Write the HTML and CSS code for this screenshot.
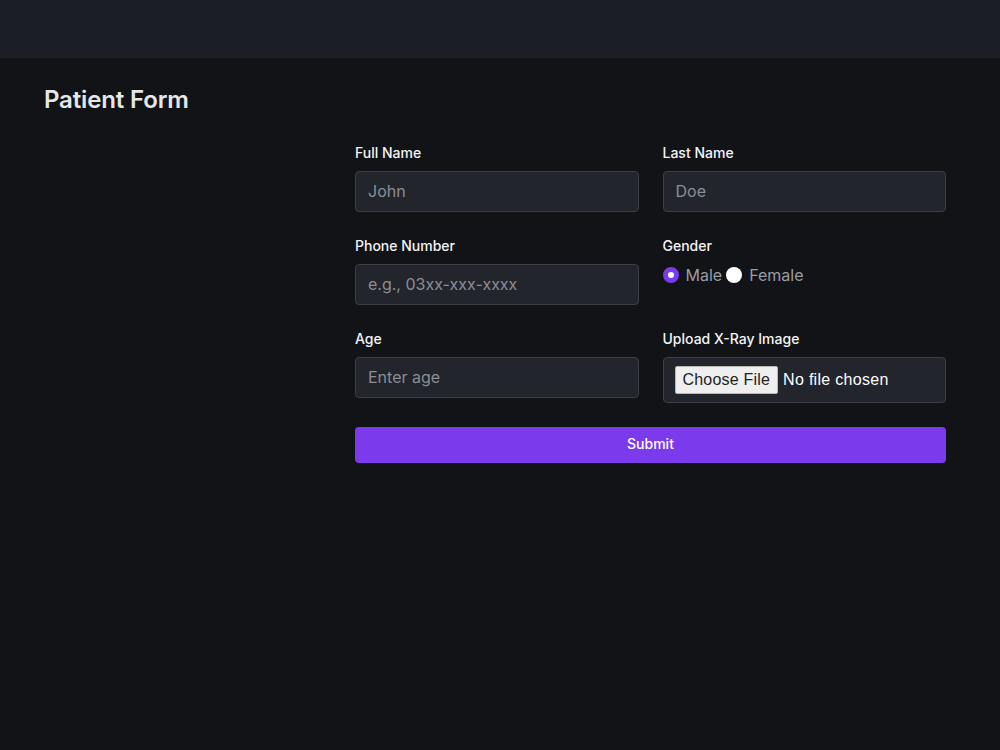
FILE: index.html
```html
<!DOCTYPE html>
<html lang="en">
<head>
    <meta charset="UTF-8">
    <meta name="viewport" content="width=device-width, initial-scale=1.0">
    <title>Patient Form</title>
    <link rel="stylesheet" href="styles.css">
</head>
<body>

<div class="topbar"></div>

<div id="container">
    <h1>Patient Form</h1>

    <form id="form" class="patient-form">
        <div class="field">
            <label for="first">Full Name</label>
            <input type="text" id="first" placeholder="John">
        </div>
        <div class="field">
            <label for="last">Last Name</label>
            <input type="text" id="last" placeholder="Doe">
        </div>

        <div class="field">
            <label for="phone">Phone Number</label>
            <input type="text" id="phone" placeholder="e.g., 03xx-xxx-xxxx">
        </div>
        <div class="field">
            <label>Gender</label>
            <div class="radios">
                <label class="radio"><span class="dot checked"></span>Male</label>
                <label class="radio"><span class="dot"></span>Female</label>
            </div>
        </div>

        <div class="field">
            <label for="age">Age</label>
            <input type="text" id="age" placeholder="Enter age">
        </div>
        <div class="field">
            <label for="xray">Upload X-Ray Image</label>
            <input type="file" id="xray" accept="image/*">
        </div>

        <button type="button" class="submit">Submit</button>
    </form>
</div>

</body>
</html>
```

FILE: styles.css
```css
body {
    font-family: Inter, "Noto Sans", sans-serif;
    background-color: #121317;
    color: #f3f4f6;
    margin: 0;
    padding: 0;
}

.topbar {
    height: 58px;
    background-color: #1b1e26;
}

#container {
    padding: 24px 44px;
}

h1 {
    margin: 2px 0 0;
    font-size: 24px;
    font-weight: 600;
    line-height: 32px;
    letter-spacing: -0.15px;
    color: #e5e7eb;
}

.patient-form {
    margin: 27px 0 0 311px;
    width: 591px;
    display: grid;
    grid-template-columns: 1fr 1fr;
    column-gap: 24px;
    row-gap: 24px;
}

.field > label {
    display: block;
    font-size: 14px;
    font-weight: 500;
    line-height: 20px;
    margin-bottom: 8px;
    color: #f3f4f6;
}

input[type="text"] {
    box-sizing: border-box;
    width: 100%;
    height: 41px;
    padding: 0 12px 1px;
    background-color: #22252c;
    border: 1px solid #3b3e46;
    border-radius: 4px;
    color: #e5e7eb;
    font-family: Inter, "Noto Sans", sans-serif;
    font-size: 16px;
}

input::placeholder {
    color: #8b8e95;
}

.radios {
    display: flex;
    align-items: center;
    height: 20px;
    padding-top: 1px;
}

.radio {
    display: flex;
    align-items: center;
    font-size: 16px;
    color: #9a9ca3;
    margin-right: 4px;
}

.dot {
    box-sizing: border-box;
    width: 16px;
    height: 16px;
    border-radius: 50%;
    background-color: #fff;
    margin-right: 7px;
}

.dot.checked {
    background-color: #fff;
    border: 5px solid #7c3aed;
}

input[type="file"] {
    box-sizing: border-box;
    width: 100%;
    height: 46px;
    padding: 8px 11px;
    background-color: #22252c;
    border: 1px solid #3b3e46;
    border-radius: 4px;
    color: #fff;
    font-family: "Liberation Sans", Arial, sans-serif;
    font-size: 16px;
    letter-spacing: 0.3px;
}

input[type="file"]::file-selector-button {
    font-family: "Liberation Sans", Arial, sans-serif;
    font-size: 16px;
    letter-spacing: 0.2px;
    color: #222;
    background-color: #efefef;
    border: 1px solid #b8b8b8;
    border-radius: 2px;
    padding: 4px 7px;
    margin-right: 5px;
}

.submit {
    grid-column: 1 / 3;
    height: 36px;
    padding: 0 0 3px;
    background-color: #7c3aed;
    border: none;
    border-radius: 4px;
    color: #fff;
    font-family: Inter, "Noto Sans", sans-serif;
    font-size: 14px;
    font-weight: 500;
    cursor: pointer;
}
```
